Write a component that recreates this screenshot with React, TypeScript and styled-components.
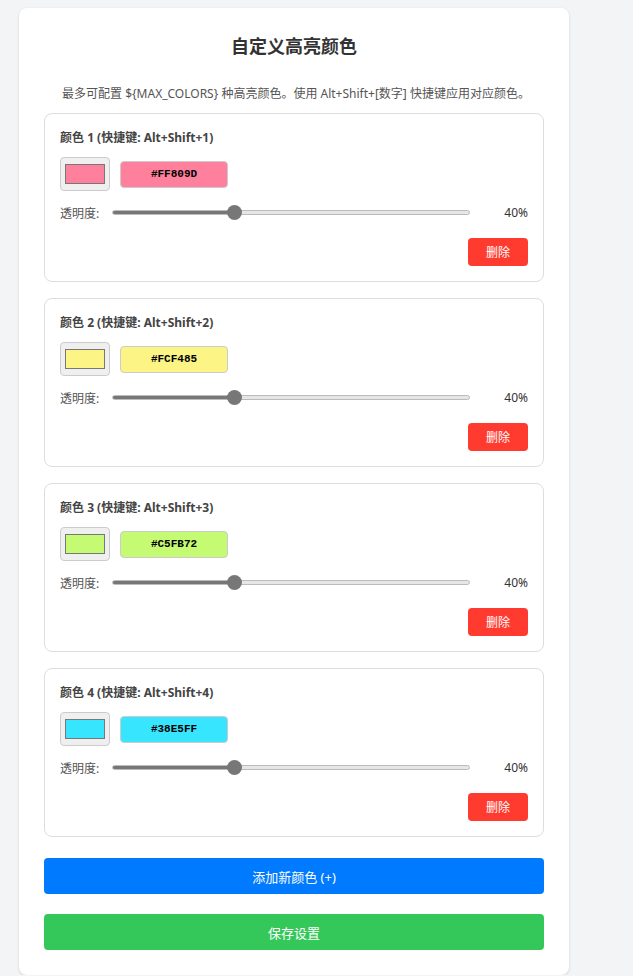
import React, { useState } from "react";
import styled, { createGlobalStyle } from "styled-components";

const GlobalStyle = createGlobalStyle`
  html, body { margin: 0; padding: 0; background: #f3f4f6; }
  body {
    font-family: "Noto Sans", "Noto Sans CJK SC", sans-serif;
    color: #333;
  }
  * { box-sizing: border-box; }
`;

const Page = styled.div`
  padding: 8px 19px 0;
`;

const Card = styled.div`
  width: 550px;
  background: #fff;
  border-radius: 8px;
  box-shadow: 0 1px 3px rgba(0, 0, 0, 0.14);
  padding: 25px;
`;

const Title = styled.h2`
  margin: 0;
  font-size: 18px;
  line-height: 27px;
  font-weight: 700;
  text-align: center;
  color: #333;
`;

const Desc = styled.p`
  margin: 25px 0 10px;
  padding-left: 4px;
  font-size: 12px;
  line-height: 18px;
  text-align: center;
  color: #555;
`;

const List = styled.div`
  display: flex;
  flex-direction: column;
  gap: 16px;
  margin-bottom: 21px;
`;

const Item = styled.div`
  border: 1px solid #ddd;
  border-radius: 8px;
  padding: 15px;
  display: flex;
  flex-direction: column;
`;

const ItemLabel = styled.div`
  font-size: 12px;
  line-height: 18px;
  font-weight: 700;
  color: #444;
`;

const ColorRow = styled.div`
  display: flex;
  align-items: center;
  gap: 10px;
  margin-top: 10px;
`;

const ColorPicker = styled.input`
  width: 50px;
  height: 34px;
  margin: 0;
  padding: 1px 2px;
  border: 1px solid #ccc;
  border-radius: 4px;
  background: #efefef;
  &::-webkit-color-swatch-wrapper { padding: 5px 2px; }
  &::-webkit-color-swatch { border: 1px solid #777; border-radius: 0; }
`;

const HexInput = styled.input<{ $bg: string }>`
  width: 108px;
  height: 27px;
  margin: 0;
  border: 1px solid #ccc;
  border-radius: 4px;
  background: ${(p) => p.$bg};
  font-family: "Liberation Mono", monospace;
  font-size: 11px;
  font-weight: 700;
  text-align: center;
  color: #000;
  outline: none;
`;

const SliderRow = styled.div`
  display: flex;
  align-items: center;
  height: 21px;
  margin-top: 11px;
`;

const SliderLabel = styled.span`
  font-size: 12px;
  color: #555;
  margin-right: 13px;
  white-space: nowrap;
`;

const Range = styled.input`
  -webkit-appearance: none;
  appearance: none;
  flex: 1;
  margin: 0;
  height: 16px;
  background: transparent;
  &::-webkit-slider-runnable-track {
    height: 5px;
    border-radius: 3px;
    border: 1px solid #bbb;
    background: var(--track);
  }
  &::-webkit-slider-thumb {
    -webkit-appearance: none;
    width: 15px;
    height: 15px;
    margin-top: -6px;
    border-radius: 50%;
    background: #777;
    border: none;
  }
`;

const Value = styled.span`
  width: 50px;
  margin-left: 8px;
  text-align: right;
  font-size: 12px;
  color: #333;
`;

const Actions = styled.div`
  display: flex;
  justify-content: flex-end;
  margin-top: 15px;
`;

const DeleteButton = styled.button`
  width: 60px;
  height: 28px;
  border: none;
  border-radius: 4px;
  background: #ff3b30;
  color: #fff;
  font-family: inherit;
  font-size: 12px;
  cursor: pointer;
`;

const WideButton = styled.button<{ $color: string }>`
  display: block;
  width: 100%;
  height: 36px;
  border: none;
  border-radius: 4px;
  background: ${(p) => p.$color};
  color: #fff;
  font-family: inherit;
  font-size: 13px;
  font-weight: 400;
  cursor: pointer;
  & + & { margin-top: 20px; }
`;

const initial = ["#FF809D", "#FCF485", "#C5FB72", "#38E5FF"];

const MIN = 0.1;
const MAX = 1;

export default function App() {
  const [colors] = useState(initial);
  const opacity = 0.4;
  const pct = ((opacity - MIN) / (MAX - MIN)) * 100;
  const track = `linear-gradient(to right, #777 0%, #777 ${pct}%, #e6e6e6 ${pct}%, #e6e6e6 100%)`;
  return (
    <Page>
      <GlobalStyle />
      <Card>
        <Title>自定义高亮颜色</Title>
        <Desc>最多可配置 ${"{"}MAX_COLORS{"}"} 种高亮颜色。使用 Alt+Shift+[数字] 快捷键应用对应颜色。</Desc>
        <List>
          {colors.map((c, i) => (
            <Item key={i}>
              <ItemLabel>颜色 {i + 1} (快捷键: Alt+Shift+{i + 1})</ItemLabel>
              <ColorRow>
                <ColorPicker type="color" defaultValue={c.toLowerCase()} />
                <HexInput type="text" defaultValue={c} $bg={c} />
              </ColorRow>
              <SliderRow>
                <SliderLabel>透明度:</SliderLabel>
                <Range
                  type="range"
                  min={MIN}
                  max={MAX}
                  step={0.1}
                  defaultValue={opacity}
                  style={{ ["--track" as any]: track }}
                />
                <Value>40%</Value>
              </SliderRow>
              <Actions>
                <DeleteButton>删除</DeleteButton>
              </Actions>
            </Item>
          ))}
        </List>
        <WideButton $color="#007aff">添加新颜色 (+)</WideButton>
        <WideButton $color="#34c759">保存设置</WideButton>
      </Card>
    </Page>
  );
}
